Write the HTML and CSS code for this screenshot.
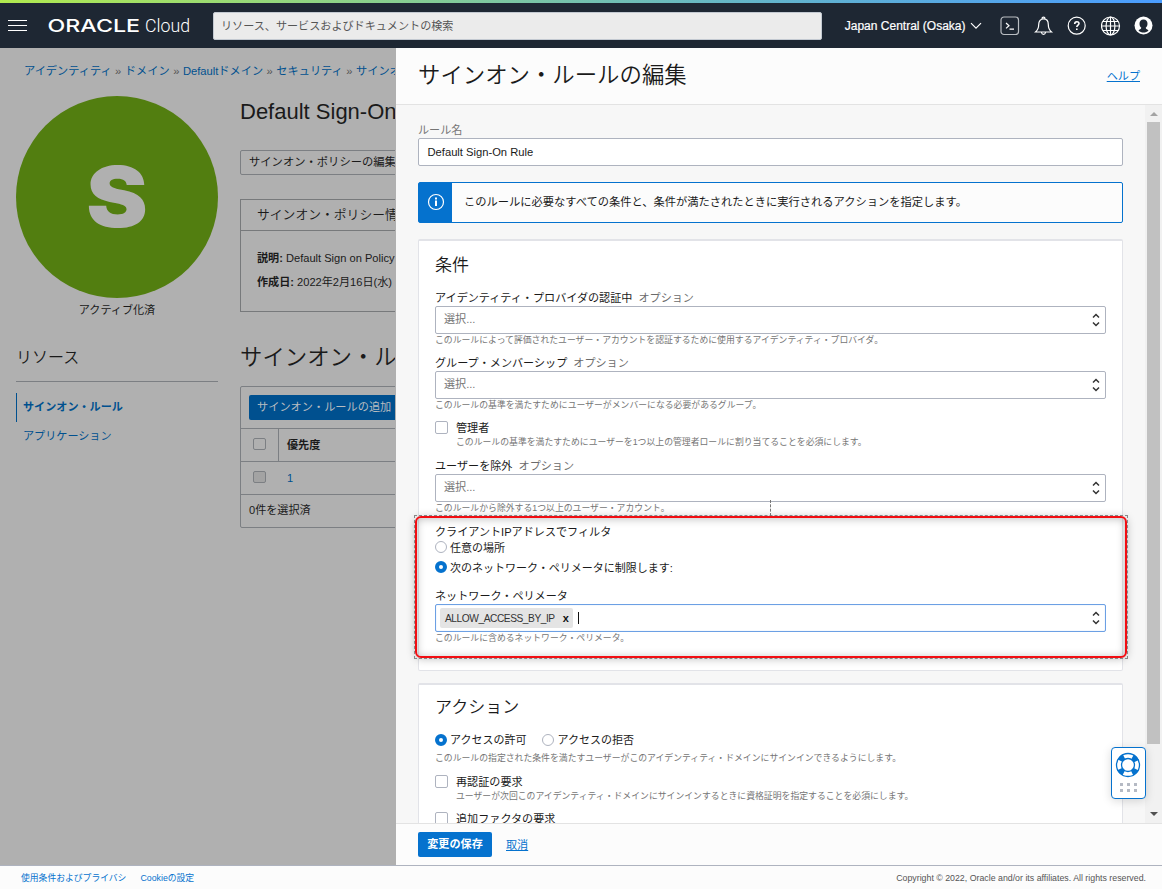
FILE: index.html
```html
<!DOCTYPE html>
<html lang="ja">
<head>
  <meta charset="UTF-8" />
  <meta name="viewport" content="width=device-width, initial-scale=1.0" />
  <title>サインオン・ルールの編集 | Oracle Cloud</title>
  <link rel="stylesheet" href="styles.css">
</head>
<body>
  <header class="topbar">
    <div class="menu-btn"><span></span><span></span><span></span></div>
    <svg class="logo" width="144" height="24" viewBox="0 0 144 24">
      <text class="logo-oracle" x="-0.500" y="18" textLength="92.500" lengthAdjust="spacingAndGlyphs">ORACLE</text>
      <text class="logo-cloud" x="97" y="18.200" textLength="45" lengthAdjust="spacingAndGlyphs">Cloud</text>
    </svg>
    <div class="search">リソース、サービスおよびドキュメントの検索</div>
    <div class="region">Japan Central (Osaka)
      <svg width="12" height="8" viewBox="0 0 12 8"><path d="M1 1.2 6 6.2 11 1.2" /></svg>
    </div>
    <div class="top-icons">
      <svg width="20" height="20" viewBox="0 0 20 20"><rect class="soft" x="1" y="1" width="17.5" height="17.5" rx="3" /><path d="M6 7l3 2.7-3 2.7M9.5 13.2h4.5" /></svg>
      <svg width="20" height="20" viewBox="0 0 20 20"><path d="M1.500 16c2.300-2 3.200-4 3.200-7.500C4.700 5 6.700 2.800 9.500 2.800S14.300 5 14.300 8.500C14.300 12 15.200 14 17.500 16zM8 2.500C8 .6 11 .6 11 2.500M7.500 16.500c.4 2.500 3.600 2.500 4 0" /></svg>
      <svg width="20" height="20" viewBox="0 0 20 20"><circle cx="9.700" cy="9.700" r="8.500" /><path class="thick" d="M7.700 8c0-3 4.300-3 4.300-.4 0 1.500-2.200 1.600-2.200 3.400M9.800 12.500v1.600" /></svg>
      <svg width="20" height="20" viewBox="0 0 20 20"><circle cx="9.500" cy="10" r="9" /><ellipse cx="9.500" cy="10" rx="4.400" ry="9" /><path d="M9.500 1v18M.5 10h18M2 5.500h15M2 14.500h15" /></svg>
      <svg width="20" height="20" viewBox="0 0 20 20"><circle cx="9.500" cy="9.500" r="9" /><path d="M9.500 3.600c2.600 0 4 1.700 4 4.200 0 1.800-.7 3.200-1.800 4 .2 1.500 2 1.700 2.800 2.700-2.800 2.800-7.200 2.800-10 0 .8-1 2.600-1.200 2.800-2.700-1.100-.8-1.800-2.200-1.800-4 0-2.500 1.400-4.200 4-4.200z" /></svg>
    </div>
  </header>

  <div class="layout">
    <div class="page">
      <div class="breadcrumb">
        <a>アイデンティティ</a> » <a>ドメイン</a> » <a>Defaultドメイン</a> » <a>セキュリティ</a> » <a>サインオン</a>
      </div>
      <div class="page-cols">
        <aside class="side">
          <div class="badge"><span>S</span></div>
          <div class="status">アクティブ化済</div>
          <h3>リソース</h3>
          <nav>
            <a class="active">サインオン・ルール</a>
            <a>アプリケーション</a>
          </nav>
        </aside>
        <main class="main">
          <h1>Default Sign-On</h1>
          <div class="btn-outline">サインオン・ポリシーの編集</div>
          <section class="info-card">
            <h4>サインオン・ポリシー情報</h4>
            <p><b>説明:</b> Default Sign on Policy</p>
            <p><b>作成日:</b> 2022年2月16日(水)</p>
          </section>
          <h2>サインオン・ルール</h2>
          <section class="rules">
            <div class="toolbar"><div class="btn-add">サインオン・ルールの追加</div></div>
            <div class="row"><div class="cell-check"><i class="check"></i></div><b>優先度</b></div>
            <div class="row"><div class="cell-check plain"><i class="check off"></i></div><a>1</a></div>
            <div class="row-foot">0件を選択済</div>
          </section>
        </main>
      </div>
    </div>

    <div class="drawer">
      <div class="drawer-head">
        <h2>サインオン・ルールの編集</h2>
        <a>ヘルプ</a>
      </div>
      <div class="drawer-mid">
        <div class="drawer-body">
          <div class="name-label">ルール名</div>
          <div class="input">Default Sign-On Rule</div>
          <div class="notice">
            <div class="notice-icon">
              <svg width="18" height="18" viewBox="0 0 18 18"><circle cx="9" cy="9" r="7.500" fill="none" stroke="#fff" stroke-width="1.200" /><path d="M8 4.500h2v2H8zM8 7.500h2V13H8z" fill="#fff" /></svg>
            </div>
            <div class="notice-text">このルールに必要なすべての条件と、条件が満たされたときに実行されるアクションを指定します。</div>
          </div>

          <section class="panel conditions">
            <h3>条件</h3>
            <div class="field">
              <div class="label">アイデンティティ・プロバイダの認証中 <span>オプション</span></div>
              <div class="select">選択...<svg class="updown" width="8" height="14" viewBox="0 0 8 14"><path d="M1 4.500 4 1.500 7 4.500M1 9.500 4 12.500 7 9.500" /></svg></div>
              <div class="hint">このルールによって評価されたユーザー・アカウントを認証するために使用するアイデンティティ・プロバイダ。</div>
            </div>
            <div class="field">
              <div class="label">グループ・メンバーシップ <span>オプション</span></div>
              <div class="select">選択...<svg class="updown" width="8" height="14" viewBox="0 0 8 14"><path d="M1 4.500 4 1.500 7 4.500M1 9.500 4 12.500 7 9.500" /></svg></div>
              <div class="hint">このルールの基準を満たすためにユーザーがメンバーになる必要があるグループ。</div>
            </div>
            <div class="check-field">
              <i class="check"></i>
              <div>
                <div class="label">管理者</div>
                <div class="hint">このルールの基準を満たすためにユーザーを1つ以上の管理者ロールに割り当てることを必須にします。</div>
              </div>
            </div>
            <div class="field">
              <div class="label">ユーザーを除外 <span>オプション</span></div>
              <div class="select">選択...<svg class="updown" width="8" height="14" viewBox="0 0 8 14"><path d="M1 4.500 4 1.500 7 4.500M1 9.500 4 12.500 7 9.500" /></svg></div>
              <div class="hint">このルールから除外する1つ以上のユーザー・アカウント。</div>
            </div>
            <div class="ip-filter">
              <div class="label">クライアントIPアドレスでフィルタ</div>
              <div class="radio-row"><i class="radio"></i>任意の場所</div>
              <div class="radio-row second"><i class="radio on"></i>次のネットワーク・ペリメータに制限します:</div>
              <div class="label">ネットワーク・ペリメータ</div>
              <div class="select focus"><span class="tag">ALLOW_ACCESS_BY_IP<b>x</b></span><i class="caret"></i><svg class="updown" width="8" height="14" viewBox="0 0 8 14"><path d="M1 4.500 4 1.500 7 4.500M1 9.500 4 12.500 7 9.500" /></svg></div>
              <div class="hint">このルールに含めるネットワーク・ペリメータ。</div>
              <div class="highlight"></div>
            </div>
          </section>

          <section class="panel actions">
            <h3>アクション</h3>
            <div class="radio-row">
              <i class="radio on"></i>アクセスの許可
              <i class="radio next"></i>アクセスの拒否
            </div>
            <div class="hint">このルールの指定された条件を満たすユーザーがこのアイデンティティ・ドメインにサインインできるようにします。</div>
            <div class="check-field">
              <i class="check"></i>
              <div>
                <div class="label">再認証の要求</div>
                <div class="hint">ユーザーが次回このアイデンティティ・ドメインにサインインするときに資格証明を指定することを必須にします。</div>
              </div>
            </div>
            <div class="check-field">
              <i class="check"></i>
              <div class="label">追加ファクタの要求</div>
            </div>
          </section>
        </div>
        <div class="scrollbar">
          <div class="arrow up"></div>
          <div class="thumb"></div>
          <div class="arrow down"></div>
        </div>
      </div>
      <div class="drawer-foot">
        <div class="btn-save">変更の保存</div>
        <a>取消</a>
      </div>
    </div>
  </div>

  <footer class="footer">
    <a>使用条件およびプライバシ</a>
    <a>Cookieの設定</a>
    <span>Copyright © 2022, Oracle and/or its affiliates. All rights reserved.</span>
  </footer>

  <div class="help-widget">
    <svg width="26" height="26" viewBox="0 0 26 26">
      <circle cx="13" cy="13" r="9" fill="none" stroke="#0572ce" stroke-width="6" stroke-dasharray="5.500 8.637" stroke-dashoffset="-4.320" />
      <circle cx="13" cy="13" r="11.500" fill="none" stroke="#0572ce" stroke-width="1.300" />
      <circle cx="13" cy="13" r="6.500" fill="none" stroke="#0572ce" stroke-width="1.300" />
    </svg>
    <div class="dots"><i></i><i></i><i></i><i></i><i></i><i></i></div>
  </div>
</body>
</html>
```

FILE: styles.css
```css
:root {
  --blue: #0572ce;
  --blue-dim: #00508f;
  --dim: #b0b0b0;
  --dim-line: #7c7f83;
  --text: #1a1a1a;
  --line: #aeb3bf;
}

* {
  box-sizing: border-box;
}

body {
  margin: 0;
  height: 889px;
  overflow: hidden;
  display: flex;
  flex-direction: column;
  font-family: "Liberation Sans", "Noto Sans CJK JP", sans-serif;
  font-size: 11.100px;
  line-height: 16px;
  color: var(--text);
  background: #fcfcfc;
  white-space: nowrap;
}

h1, h2, h3, h4, p {
  margin: 0;
  font-weight: 350;
}

i {
  display: block;
  flex: none;
}

b {
  font-weight: bold;
}

/* top bar */
.topbar {
  height: 48px;
  flex: none;
  display: flex;
  align-items: center;
  padding: 3px 8px 0;
  background: linear-gradient(90deg, #b1ea4f, #66b7c5 62%, #4a9cff) top / 100% 3px no-repeat #1e2733;
  color: #fff;
}

.menu-btn {
  width: 19px;
  height: 11px;
  margin-right: 21px;
  display: flex;
  flex-direction: column;
  justify-content: space-between;
}

.menu-btn span {
  height: 1px;
  background: #fff;
}

.logo {
  flex: none;
  fill: #fff;
}

.logo-oracle {
  font: 500 17.500px Inter, sans-serif;
}

.logo-cloud {
  font: 300 19px Roboto, sans-serif;
}

.search {
  width: 609px;
  height: 28px;
  margin-left: 21px;
  padding: 5px 7px;
  border: 1px solid #c3c9d1;
  border-radius: 2px;
  background: #ebebeb;
  color: #555;
}

.region {
  display: flex;
  align-items: center;
  gap: 4px;
  margin-left: 23px;
  font-size: 12px;
  -webkit-text-stroke: 0.2px #fff;
}

.topbar svg path,
.topbar svg circle,
.topbar svg ellipse,
.topbar svg rect {
  fill: none;
  stroke: #fff;
  stroke-width: 1.200;
}

.topbar svg .soft {
  stroke: #b9bdc2;
}

.topbar svg .thick {
  stroke-width: 1.600;
}

.topbar .top-icons svg:last-child circle {
  fill: #fff;
  stroke: none;
}

.topbar .top-icons svg:last-child path {
  fill: #1e2733;
  stroke: none;
}

.top-icons {
  display: flex;
  gap: 13.500px;
  margin-left: 18.500px;
}

/* dimmed page */
.layout {
  flex: 1;
  min-height: 0;
  display: flex;
}

.page {
  width: 396px;
  flex: none;
  overflow: hidden;
  background: var(--dim);
  border-right: 1px solid var(--dim);
}

.page a {
  color: var(--blue-dim);
}

.breadcrumb {
  height: 48px;
  padding: 15px 0 0 24px;
  color: #555;
  font-size: 11.200px;
  word-spacing: 0.400px;
}

.page-cols {
  display: flex;
  gap: 22px;
  padding-left: 16px;
}

.side {
  width: 202px;
  flex: none;
}

.badge {
  height: 202px;
  border-radius: 50%;
  background: #527e10;
  color: var(--dim);
  font: 900 84px/202px Inter, sans-serif;
  text-align: center;
}

.badge span {
  display: inline-block;
  transform: scaleX(1.100);
}

.status {
  margin-top: 4px;
  text-align: center;
}

.side h3 {
  height: 64px;
  padding-top: 28px;
  font-size: 16px;
  line-height: 24px;
  border-bottom: 1px solid var(--dim-line);
}

.side nav {
  display: flex;
  flex-direction: column;
  margin-top: 11px;
}

.side nav a {
  height: 29px;
  padding-left: 7px;
  line-height: 29px;
}

.side nav a.active {
  padding-left: 6px;
  border-left: 1px solid var(--blue-dim);
  font-weight: bold;
}

.main {
  width: 700px;
  flex: none;
}

.main h1 {
  font-size: 22px;
  line-height: 31px;
}

.btn-outline {
  width: 170px;
  height: 25px;
  margin-top: 23px;
  padding: 3px 8px;
  border: 1px solid var(--dim-line);
  border-radius: 2px;
  font-size: 11.300px;
}

.info-card {
  height: 113px;
  margin-top: 24px;
  border: 1px solid #77797b;
}

.info-card h4 {
  height: 31px;
  margin-bottom: 15px;
  padding-left: 16px;
  font-size: 12.800px;
  line-height: 29px;
  border-bottom: 1px solid #77797b;
}

.info-card p {
  padding-left: 16px;
  font-weight: normal;
  line-height: 24px;
}

.main h2 {
  margin-top: 30px;
  font-size: 22.400px;
  line-height: 32px;
}

.rules {
  margin-top: 12px;
  border: 1px solid var(--dim-line);
  border-radius: 2px;
}

.toolbar {
  height: 42px;
  padding: 8px;
  border-bottom: 1px solid var(--dim-line);
}

.btn-add {
  width: 160px;
  height: 25px;
  padding: 0 8px;
  border-radius: 2px;
  background: #00508f;
  color: #b8bcc0;
  font-size: 11.200px;
  line-height: 25px;
}

.row {
  display: flex;
  align-items: center;
  height: 33px;
  padding-bottom: 1px;
  gap: 8px;
  border-bottom: 1px solid var(--dim-line);
}

.cell-check {
  width: 38px;
  height: 32px;
  display: flex;
  align-items: center;
  justify-content: center;
  padding-bottom: 1px;
  border-right: 1px solid var(--dim-line);
}

.cell-check.plain {
  border-color: transparent;
}

.row-foot {
  height: 32px;
  padding-left: 8px;
  line-height: 31px;
}

.check {
  width: 13px;
  height: 13px;
  border: 1px solid #aeb3bf;
  border-radius: 2px;
  background: #fff;
}

.page .check {
  height: 12px;
  border-color: var(--dim-line);
  background: var(--dim);
}

.page .check.off {
  background: #a3a3a3;
}

/* edit drawer */
.drawer {
  flex: 1;
  min-width: 0;
  display: flex;
  flex-direction: column;
}

.drawer-head {
  height: 57px;
  flex: none;
  display: flex;
  justify-content: space-between;
  align-items: center;
  padding: 0 22px 1px;
  border-bottom: 1px solid #e3e3e3;
}

.drawer-head h2 {
  font-size: 22.400px;
  line-height: 32px;
}

.drawer a {
  color: var(--blue);
  text-decoration: underline;
}

.drawer-mid {
  flex: 1;
  min-height: 0;
  display: flex;
}

.drawer-body {
  flex: 1;
  overflow: hidden;
  padding: 17px 22px 0;
  background: #f7f7f7;
}

.name-label {
  color: #757575;
}

.input {
  height: 28px;
  padding: 5px 8.500px;
  border: 1px solid var(--line);
  border-radius: 2px;
  background: #fff;
  font-size: 11.200px;
}

.notice {
  height: 41px;
  margin-top: 16px;
  display: flex;
  border: 1px solid var(--blue);
  border-radius: 2px;
  background: #fcfcfc;
  font-size: 11.250px;
  line-height: 39px;
}

.notice-icon {
  width: 33px;
  display: flex;
  align-items: center;
  justify-content: center;
  padding-bottom: 1px;
  background: var(--blue);
}

.notice-text {
  padding-left: 12px;
}

.panel {
  padding: 11px 16px 0;
  border: 1px solid #e2e3e8;
  border-top-width: 2px;
  border-radius: 2px;
  background: #fff;
}

.panel h3 {
  font-size: 17px;
  line-height: 25px;
}

.conditions {
  height: 432px;
  margin-top: 16px;
}

.conditions h3 {
  padding-top: 1px;
  margin-bottom: 12px;
}

.actions {
  height: 300px;
  margin-top: 12px;
  padding-top: 10px;
}

.field {
  margin-bottom: 9px;
}

.label span {
  margin-left: 3px;
  color: #6b6b6b;
}

.select {
  height: 28px;
  display: flex;
  align-items: center;
  padding: 0 5px 2px 8px;
  border: 1px solid var(--line);
  border-radius: 2px;
  color: #757575;
}

.select.focus {
  padding: 0 5px 0 4px;
  border-color: #6ca0e4;
  box-shadow: inset 0 0 1px #9dc3f2;
}

.updown {
  margin-left: auto;
  position: relative;
  top: 1px;
  fill: none;
  stroke: #333;
  stroke-width: 1.500;
}

.focus .updown {
  top: 0;
}

.hint {
  color: #757575;
  font-size: 8.850px;
  line-height: 12px;
}

.check-field {
  display: flex;
  gap: 8px;
  margin-bottom: 10px;
}

.check-field .check {
  margin-top: 1px;
}

.radio-row {
  height: 15px;
  display: flex;
  align-items: center;
  gap: 3px;
  font-size: 11px;
}

.radio {
  width: 12px;
  height: 12px;
  margin-top: -1px;
  border: 1px solid var(--line);
  border-radius: 50%;
  background: #fff;
}

.radio.on {
  border: 4px solid var(--blue);
}

.radio.next {
  margin-left: 13px;
}

.ip-filter {
  position: relative;
  margin-top: 10px;
}

.radio-row.second {
  margin: 5px 0 13px;
}

.tag {
  height: 20px;
  padding: 0 5px;
  border-radius: 2px;
  background: #e4e4e4;
  color: #333;
  font-size: 10.200px;
  letter-spacing: -0.450px;
  line-height: 21px;
}

.tag b {
  margin-left: 8px;
  color: #111;
  font-size: 11px;
}

.caret {
  width: 1px;
  height: 12px;
  margin-left: 5px;
  background: #111;
}

/* red frame over the IP filter, with its dotted selection box */
.highlight {
  position: absolute;
  top: -8px;
  left: -20px;
  width: 712px;
  height: 142px;
  border: 2px solid #f20d12;
  border-radius: 6px;
  box-shadow: 0 1px 8px rgba(0, 0, 0, 0.250), inset 0 1px 8px rgba(0, 0, 0, 0.250);
}

.highlight::before {
  content: "";
  position: absolute;
  inset: -3px;
  border: 1px dashed #888;
}

.highlight::after {
  content: "";
  position: absolute;
  top: -18px;
  left: 353px;
  height: 16px;
  border-left: 1px dashed #777;
}

.actions .radio-row {
  margin: 12px 0 4px;
  height: 16px;
}

.actions .check-field {
  margin: 9px 0 0;
}

.actions .hint + .check-field {
  margin-top: 10px;
}

.scrollbar {
  width: 17px;
  display: flex;
  flex-direction: column;
  align-items: center;
  background: #f1f1f1;
}

.thumb {
  width: 13px;
  height: 622px;
  margin: 9px 0 auto;
  background: #c1c1c1;
}

.arrow {
  width: 0;
  height: 0;
  border: 4px solid transparent;
}

.arrow.up {
  margin-top: 3px;
  margin-bottom: -3px;
  border-bottom-color: #a3a3a3;
}

.arrow.down {
  margin-bottom: 3px;
  border-top-color: #505050;
}

.drawer-foot {
  height: 42px;
  flex: none;
  display: flex;
  align-items: center;
  gap: 14px;
  padding-left: 22px;
  border-top: 1px solid #e3e3e3;
}

.btn-save {
  width: 74px;
  height: 25px;
  border-radius: 2px;
  background: var(--blue);
  color: #fff;
  font-weight: bold;
  line-height: 25px;
  text-align: center;
}

.footer {
  height: 24px;
  flex: none;
  display: flex;
  align-items: center;
  gap: 14px;
  padding: 0 16px 0 21px;
  border-top: 1px solid var(--line);
  font-size: 8.800px;
}

.footer a {
  color: var(--blue);
}

.footer span {
  margin-left: auto;
  color: #555;
}

/* floating help button */
.help-widget {
  position: absolute;
  top: 747px;
  left: 1111px;
  width: 35px;
  height: 52px;
  display: flex;
  flex-direction: column;
  align-items: center;
  padding: 4px 1px 0 0;
  border: 1px solid var(--blue);
  border-radius: 4px;
  background: #fff;
  box-shadow: 0 2px 10px rgba(0, 0, 0, 0.150);
}

.dots {
  display: grid;
  grid-template-columns: repeat(3, 3px);
  gap: 3px 4px;
  margin-top: 5px;
}

.dots i {
  height: 3px;
  background: #b5bac4;
}
```
